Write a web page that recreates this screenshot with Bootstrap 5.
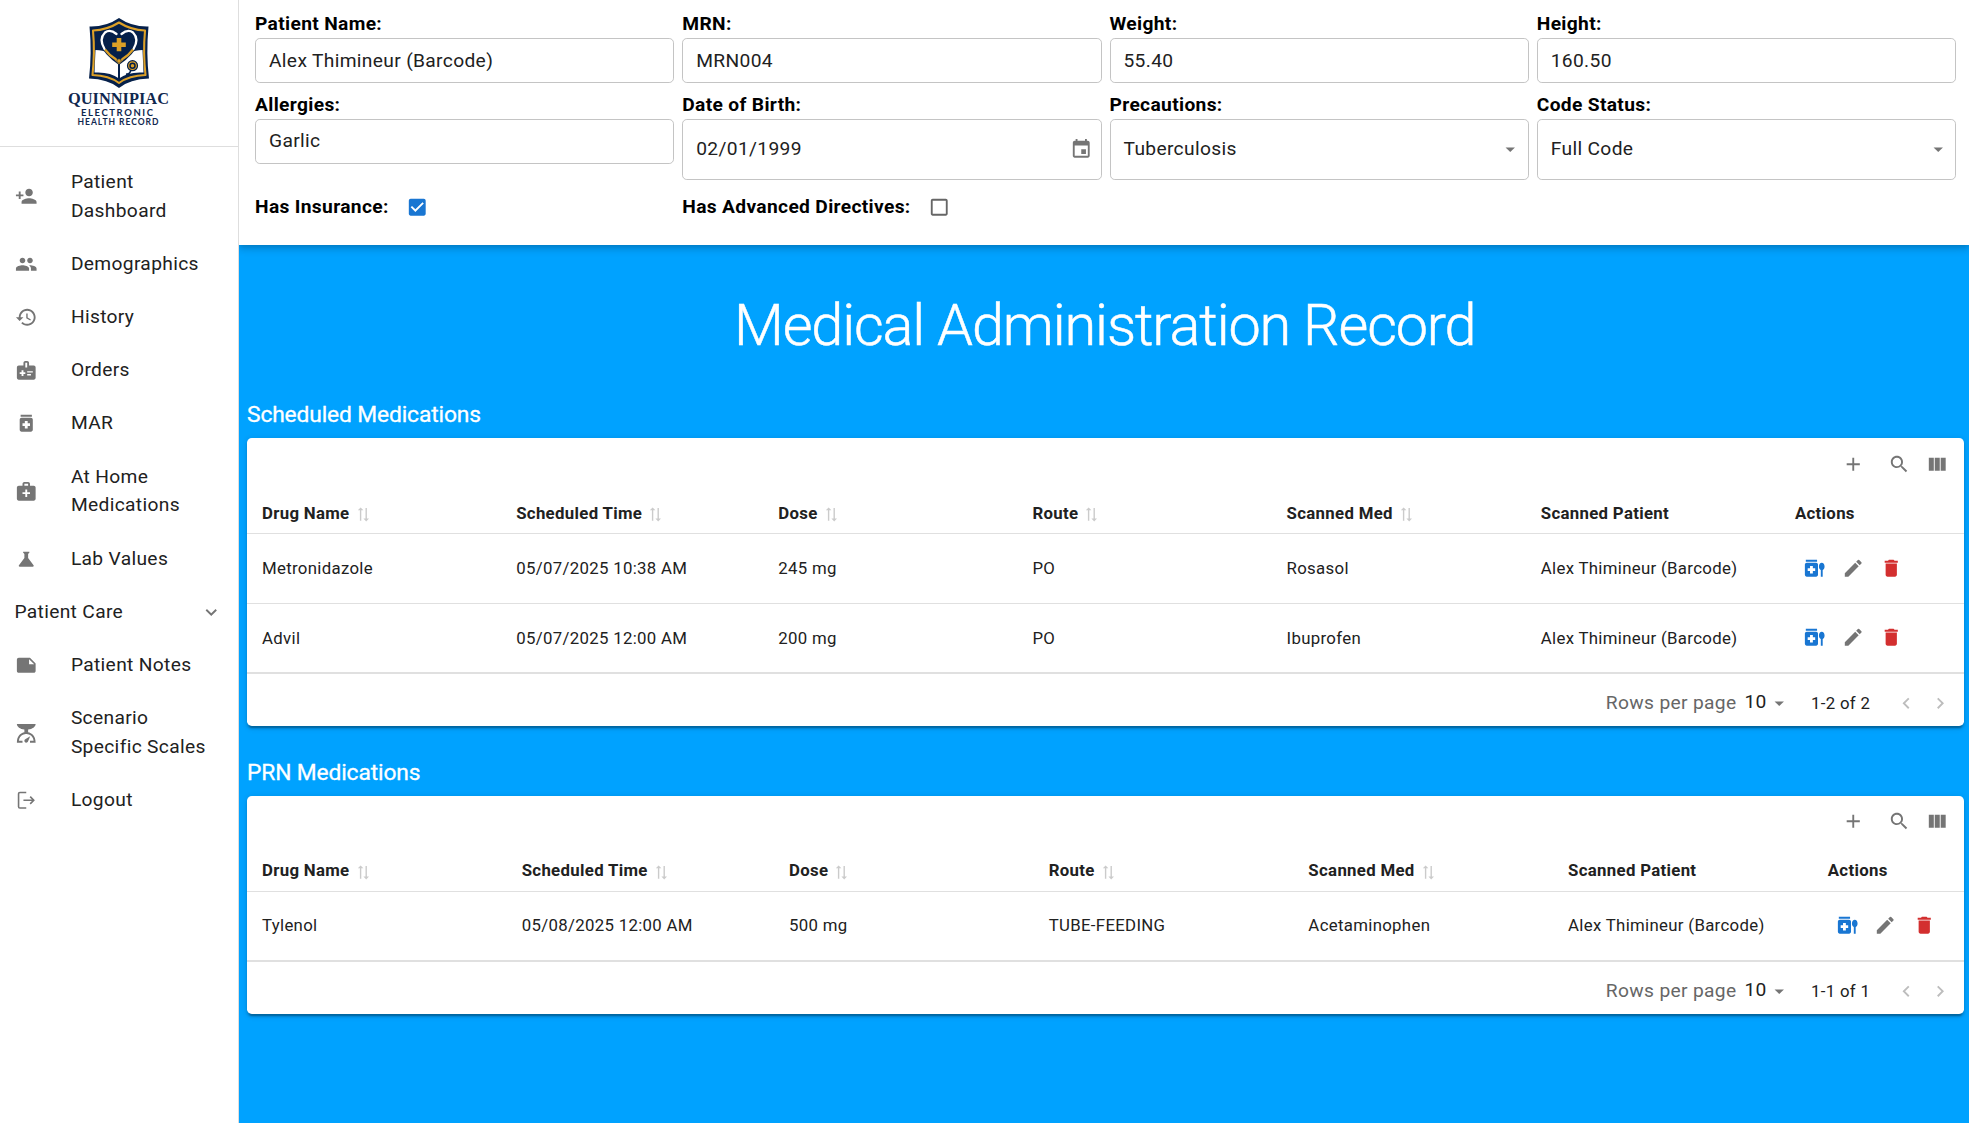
<!DOCTYPE html>
<html lang="en">
<head>
<meta charset="utf-8">
<meta name="viewport" content="width=device-width, initial-scale=1">
<title>Medical Administration Record</title>
<link href="https://cdn.jsdelivr.net/npm/bootstrap@5.3.0/dist/css/bootstrap.min.css" rel="stylesheet">
<style>
  body { font-family: Roboto, "Liberation Sans", sans-serif; font-size: 19.2px; line-height: 28.8px; letter-spacing: .34px; color: #212121; height: 1123px; overflow: hidden; }
  .ico { width: 22.5px; height: 22.5px; fill: currentColor; flex: none; display: block; }
  .side { width: 239px; border-right: 1px solid #dedede; }
  .brand-box { height: 147px; border-bottom: 1px solid #dedede; padding-top: 17px; }
  .navlist { padding-top: 8.5px; }
  .navitem { padding: 12.21px 14.4px; color: #212121; text-decoration: none; }
  .navitem .ico { color: #757575; margin: 0 33.2px 0 .8px; }
  .navitem .chev { margin: 0 1.6px 0 auto; }
  .main { background: #00a2ff; }
  .phead { height: 245px; padding: 10px 13px 0 16px; box-shadow: 0 2.4px 4.8px -1.2px rgba(0,0,0,.14), 0 4.8px 6px rgba(0,0,0,.1), 0 1.2px 12px rgba(0,0,0,.1); }
  .fgrid { display: grid; grid-template-columns: repeat(4, 1fr); gap: 7.6px 8px; }
  .fgrid label { font-weight: 700; color: #000; display: block; height: 28.2px; }
  .fbox { border: 1px solid #c4c4c4; border-radius: 4.8px; height: 44.8px; padding: 1px 13px 0; }
  .fbox.tall { height: 61px; padding-top: 0; }
  .fbox.picker { padding-right: 8.5px; }
  .fbox.choice { padding-right: 6px; }
  .fbox .ico { color: #757575; }
  .checkrow { height: 40px; }
  .checkrow .ico { margin-left: 17px; }
  .blue { color: #1976d2; } .grey { color: #757575; } .red { color: #d32f2f; } .dim { color: #666; }
  .page-title { font-size: 57.6px; font-weight: 300; line-height: 67.2px; letter-spacing: -1.13px; margin: 46.6px 0 0; padding-left: 1.5px; -webkit-text-stroke: .5px #fff; }
  .sec-title { font-size: 22.8px; font-weight: 400; line-height: 30px; letter-spacing: -.14px; margin: 0; padding: 41px 0 8px 8px; -webkit-text-stroke: .3px #fff; }
  .sec-title.second { padding: 32.2px 0 7.6px 8px; }
  .panel { border-radius: 4.8px; box-shadow: 0 3.6px 1.2px -2.4px rgba(0,0,0,.2), 0 2.4px 2.4px rgba(0,0,0,.14), 0 1.2px 6px rgba(0,0,0,.12); margin-right: 5.4px; margin-left: 8px; }
  .tools { height: 52px; padding-right: 15.2px; }
  .tools .t-add { margin-right: 23.7px; }
  .tools .t-find { margin-right: 15.5px; }
  .mar { table-layout: fixed; width: 100%; font-size: 16.8px; line-height: 24px; letter-spacing: .32px; border-collapse: collapse; }
  .mar th { height: 44px; padding: 2px 0 0 15px; font-weight: 700; border-bottom: 1px solid #e0e0e0; white-space: nowrap; }
  .mar td { height: 70px; padding: 0 0 1.4px 15px; border-bottom: 1px solid #e0e0e0; }
  .mar tr:last-child td { height: 69px; }
  .w-a { width: 254.2px; } .w-b { width: 262px; }
  .w-c { width: 259.7px; } .w-d { width: 267.3px; }
  .sorter { width: 16.8px; height: 16.8px; display: inline-block; fill: #cbcbcb; transform: rotate(-90deg); margin-left: 5px; vertical-align: -4px; }
  .acts { gap: 16.3px; padding-left: 7.8px; }
  .pager { height: 52.6px; border-top: 1px solid #e0e0e0; padding: 6.4px 12.5px 0 0; }
  .pager .p-label { margin-right: 8px; }
  .pager .p-size { margin-top: -1px; }
  .pager .p-drop { margin: 0 20.5px 0 1.2px; }
  .pager .p-range { font-size: 16.8px; margin-right: 25px; }
  .pager .p-prev { margin-right: 10.8px; }
  .off { color: #bdbdbd; }
</style>
</head>
<body class="d-flex">
<svg class="d-none">
  <symbol id="add-person" viewBox="0 0 24 24"><path d="M15 12c2.21 0 4-1.79 4-4s-1.79-4-4-4-4 1.79-4 4 1.79 4 4 4zm-9-2V7H4v3H1v2h3v3h2v-3h3v-2H6zm9 4c-2.67 0-8 1.34-8 4v2h16v-2c0-2.66-5.33-4-8-4z"/></symbol>
  <symbol id="people" viewBox="0 0 24 24"><path d="M16 11c1.66 0 2.99-1.34 2.99-3S17.66 5 16 5c-1.66 0-3 1.34-3 3s1.34 3 3 3zm-8 0c1.66 0 2.99-1.34 2.99-3S9.66 5 8 5C6.34 5 5 6.34 5 8s1.34 3 3 3zm0 2c-2.33 0-7 1.17-7 3.5V19h14v-2.5c0-2.33-4.67-3.5-7-3.5zm8 0c-.29 0-.62.02-.97.05 1.16.84 1.97 1.97 1.97 3.45V19h6v-2.5c0-2.33-4.67-3.5-7-3.5z"/></symbol>
  <symbol id="history" viewBox="0 0 24 24"><path d="M13 3c-4.97 0-9 4.03-9 9H1l3.89 3.89.07.14L9 12H6c0-3.87 3.13-7 7-7s7 3.13 7 7-3.13 7-7 7c-1.93 0-3.68-.79-4.94-2.06l-1.42 1.42C8.27 19.99 10.51 21 13 21c4.97 0 9-4.03 9-9s-4.03-9-9-9zm-1 5v5l4.28 2.54.72-1.21-3.5-2.08V8H12z"/></symbol>
  <symbol id="medinfo" viewBox="0 0 24 24"><path d="M20 7h-5V4c0-1.1-.9-2-2-2h-2c-1.1 0-2 .9-2 2v3H4c-1.1 0-2 .9-2 2v11c0 1.1.9 2 2 2h16c1.1 0 2-.9 2-2V9c0-1.1-.9-2-2-2zm-9-3h2v5h-2V4zm0 12H9v2H7v-2H5v-2h2v-2h2v2h2v2zm2-1.5V13h6v1.5h-6zm0 3V16h4v1.5h-4z"/></symbol>
  <symbol id="medication" viewBox="0 0 24 24"><path d="M6 3h12v2H6zm11 3H7c-1.1 0-2 .9-2 2v11c0 1.1.9 2 2 2h10c1.1 0 2-.9 2-2V8c0-1.1-.9-2-2-2zm-1 9h-2.5v2.5h-3V15H8v-3h2.5V9.5h3V12H16v3z"/></symbol>
  <symbol id="medkit" viewBox="0 0 24 24"><path d="M20 6h-4V4c0-1.1-.9-2-2-2h-4c-1.1 0-2 .9-2 2v2H4c-1.1 0-2 .9-2 2v12c0 1.1.9 2 2 2h16c1.1 0 2-.9 2-2V8c0-1.1-.9-2-2-2zM10 4h4v2h-4V4zm6 11h-3v3h-2v-3H8v-2h3v-3h2v3h3v2z"/></symbol>
  <symbol id="science" viewBox="0 0 24 24"><path d="M19.8 18.4 14 10.67V6.5l1.35-1.69c.26-.33.03-.81-.39-.81H9.04c-.42 0-.65.48-.39.81L10 6.5v4.17L4.2 18.4c-.49.66-.02 1.6.8 1.6h14c.82 0 1.29-.94.8-1.6z"/></symbol>
  <symbol id="expand" viewBox="0 0 24 24"><path d="M16.59 8.59 12 13.17 7.41 8.59 6 10l6 6 6-6z"/></symbol>
  <symbol id="note" viewBox="0 0 24 24"><path d="m22 10-6-6H4c-1.1 0-2 .9-2 2v12.01c0 1.1.9 1.99 2 1.99l16-.01c1.1 0 2-.89 2-1.99v-8zm-7-4.5 5.5 5.5H15V5.5z"/></symbol>
  <symbol id="scale" viewBox="0 0 24 24"><path d="M14 11V8c4.56-.58 8-3.1 8-6H2c0 2.9 3.44 5.42 8 6v3c-3.68.73-8 3.61-8 11h6v-2H4.13c.93-6.83 6.65-7.2 7.87-7.2s6.94.37 7.87 7.2H16v2h6c0-7.39-4.32-10.27-8-11z"/><path d="M16.2 15.2 10.9 18.35c-.93.62-1.18 1.87-.56 2.8s1.87 1.18 2.8.56c.25-.17.45-.38.6-.6z"/></symbol>
  <symbol id="logout" viewBox="0 0 24 24"><path d="M12 3.7H5.2c-.8 0-1.4.6-1.4 1.4v13.8c0 .8.6 1.4 1.4 1.4H12M9 12h11M16.2 8.2 20 12l-3.8 3.8" fill="none" stroke="currentColor" stroke-width="1.7"/></symbol>
  <symbol id="event" viewBox="0 0 24 24"><path d="M17 12h-5v5h5v-5zM16 1v2H8V1H6v2H5c-1.11 0-1.99.9-1.99 2L3 19c0 1.1.89 2 2 2h14c1.1 0 2-.9 2-2V5c0-1.1-.9-2-2-2h-1V1h-2zm3 18H5V8h14v11z"/></symbol>
  <symbol id="drop" viewBox="0 0 24 24"><path d="m7 10 5 5 5-5z"/></symbol>
  <symbol id="cb-on" viewBox="0 0 24 24"><path d="M19 3H5c-1.11 0-2 .9-2 2v14c0 1.1.89 2 2 2h14c1.11 0 2-.9 2-2V5c0-1.1-.89-2-2-2zm-9 14-5-5 1.41-1.41L10 14.17l7.59-7.59L19 8l-9 9z"/></symbol>
  <symbol id="cb-off" viewBox="0 0 24 24"><path d="M19 5v14H5V5h14m0-2H5c-1.1 0-2 .9-2 2v14c0 1.1.9 2 2 2h14c1.1 0 2-.9 2-2V5c0-1.1-.9-2-2-2z"/></symbol>
  <symbol id="plus" viewBox="0 0 24 24"><path d="M19 13h-6v6h-2v-6H5v-2h6V5h2v6h6v2z"/></symbol>
  <symbol id="search" viewBox="0 0 24 24"><path d="M15.5 14h-.79l-.28-.27C15.41 12.59 16 11.11 16 9.5 16 5.91 13.09 3 9.5 3S3 5.91 3 9.5 5.91 16 9.5 16c1.61 0 3.09-.59 4.23-1.57l.27.28v.79l5 4.99L20.49 19l-4.99-5zm-6 0C7.01 14 5 11.99 5 9.5S7.01 5 9.5 5 14 7.01 14 9.5 11.99 14 9.5 14z"/></symbol>
  <symbol id="columns" viewBox="0 0 24 24"><path d="M14.67 5v14H9.33V5h5.34zm1 14H21V5h-5.33v14zm-7.34 0V5H3v14h5.33z"/></symbol>
  <symbol id="sort" viewBox="0 0 24 24"><path d="m22 8-4-4v3H3v2h15v3l4-4zM2 16l4 4v-3h15v-2H6v-3l-4 4z"/></symbol>
  <symbol id="liquid" viewBox="0 0 24 24"><path d="M3 3h12v2H3zm11 3H4c-1.1 0-2 .9-2 2v11c0 1.1.9 2 2 2h10c1.1 0 2-.9 2-2V8c0-1.1-.9-2-2-2zm-1 9h-2.5v2.5h-3V15H5v-3h2.5V9.5h3V12H13v3zm7-9c-1.68 0-3 1.76-3 4 0 1.77.83 3.22 2 3.76V21h2v-7.24c1.17-.54 2-1.99 2-3.76 0-2.24-1.32-4-3-4z"/></symbol>
  <symbol id="edit" viewBox="0 0 24 24"><path d="M3 17.25V21h3.75L17.81 9.94l-3.75-3.75L3 17.25zM20.71 7.04c.39-.39.39-1.02 0-1.41l-2.34-2.34a1 1 0 0 0-1.41 0l-1.83 1.83 3.75 3.75 1.83-1.83z"/></symbol>
  <symbol id="trash" viewBox="0 0 24 24"><path d="M6 19c0 1.1.9 2 2 2h8c1.1 0 2-.9 2-2V7H6v12zM19 4h-3.5l-1-1h-5l-1 1H5v2h14V4z"/></symbol>
  <symbol id="prev" viewBox="0 0 24 24"><path d="M15.41 7.41 14 6l-6 6 6 6 1.41-1.41L10.83 12z"/></symbol>
  <symbol id="next" viewBox="0 0 24 24"><path d="M10 6 8.59 7.41 13.17 12l-4.58 4.59L10 18l6-6z"/></symbol>
</svg>

<aside class="side bg-white flex-shrink-0 h-100">
  <div class="brand-box text-center">
    <svg width="110" height="112" viewBox="0 0 110 112">
      <g stroke-linejoin="round">
        <path d="M55 1 Q42 10 25.500 9.500 Q28 36 25 61.500 Q44 62 55 71 Q66 62 85 61.500 Q82 36 84.500 9.500 Q68 10 55 1Z" fill="#05204a"/>
        <path d="M55 5.500 Q43 13 29 13.500 Q31 36 28.500 58 Q45 58.500 55 66 Q65 58.500 81.500 58 Q79 36 81 13.500 Q67 13 55 5.500Z" fill="none" stroke="#dca027" stroke-width="2.100"/>
        <path d="M31.500 33 Q46 33 55 46 Q64 33 78.500 33 L79.500 55.500 Q64 54.500 55 61.500 Q46 54.500 30.500 55.500Z" fill="#fff"/>
        <path d="M55 45V62" stroke="#05204a" stroke-width="2"/>
        <path d="M36 26 Q39 37 55 48 Q71 37 74 26 L70 18H40Z" fill="#05204a"/>
        <path d="M52.500 17 Q46 11.500 41 15.500 Q34.500 22 40.500 32 M57.500 17 Q64 11.500 69 15.500 Q75.500 22 69.500 32" fill="none" stroke="#fff" stroke-width="2.300" stroke-linecap="round"/>
        <path d="M41 32.500 Q45 38 51.500 42 L55 46 L58.500 42 Q65 38 69 32.500" fill="none" stroke="#dca027" stroke-width="2.200"/>
        <circle cx="55" cy="44" r="2.200" fill="#dca027" stroke="#05204a" stroke-width=".6"/>
        <path d="M52.700 21h4.600v4.500h4.500v4.400h-4.500v4.400h-4.600v-4.400h-4.500v-4.400h4.500z" fill="#dca027"/>
        <path d="M67 53 Q65.500 58 62 57" fill="none" stroke="#05204a" stroke-width="1.600"/>
        <circle cx="68.500" cy="48.700" r="5" fill="#dca027" stroke="#05204a" stroke-width="1.200"/><circle cx="68.500" cy="48.700" r="2.500" fill="#dca027" stroke="#05204a" stroke-width="1.500"/>
      </g>
      <g fill="#10284f" text-anchor="middle" letter-spacing="0">
        <text x="54.500" y="87" font-family="Liberation Serif, serif" font-weight="700" font-size="16.500" textLength="101" lengthAdjust="spacingAndGlyphs">QUINNIPIAC</text>
        <text x="53" y="98.500" font-family="Lato, sans-serif" font-weight="700" font-size="9.500" textLength="72">ELECTRONIC</text>
        <text x="54" y="107.500" font-family="Lato, sans-serif" font-weight="700" font-size="8.500" textLength="81">HEALTH RECORD</text>
      </g>
    </svg>
  </div>
  <nav class="navlist d-flex flex-column">
    <a class="navitem d-flex align-items-center"><svg class="ico"><use href="#add-person"/></svg><span>Patient<br>Dashboard</span></a>
    <a class="navitem d-flex align-items-center"><svg class="ico"><use href="#people"/></svg><span>Demographics</span></a>
    <a class="navitem d-flex align-items-center"><svg class="ico"><use href="#history"/></svg><span>History</span></a>
    <a class="navitem d-flex align-items-center"><svg class="ico"><use href="#medinfo"/></svg><span>Orders</span></a>
    <a class="navitem d-flex align-items-center"><svg class="ico"><use href="#medication"/></svg><span>MAR</span></a>
    <a class="navitem d-flex align-items-center"><svg class="ico"><use href="#medkit"/></svg><span>At Home<br>Medications</span></a>
    <a class="navitem d-flex align-items-center"><svg class="ico"><use href="#science"/></svg><span>Lab Values</span></a>
    <a class="navitem d-flex align-items-center"><span>Patient Care</span><svg class="ico chev"><use href="#expand"/></svg></a>
    <a class="navitem d-flex align-items-center"><svg class="ico"><use href="#note"/></svg><span>Patient Notes</span></a>
    <a class="navitem d-flex align-items-center"><svg class="ico"><use href="#scale"/></svg><span>Scenario<br>Specific Scales</span></a>
    <a class="navitem d-flex align-items-center"><svg class="ico"><use href="#logout"/></svg><span>Logout</span></a>
  </nav>
</aside>

<div class="main flex-grow-1 h-100 overflow-hidden">
  <header class="phead bg-white">
    <div class="fgrid">
      <div><label>Patient Name:</label><div class="fbox d-flex align-items-center">Alex Thimineur (Barcode)</div></div>
      <div><label>MRN:</label><div class="fbox d-flex align-items-center">MRN004</div></div>
      <div><label>Weight:</label><div class="fbox d-flex align-items-center">55.40</div></div>
      <div><label>Height:</label><div class="fbox d-flex align-items-center">160.50</div></div>
      <div><label>Allergies:</label><div class="fbox d-flex align-items-center">Garlic</div></div>
      <div><label>Date of Birth:</label><div class="fbox tall picker d-flex align-items-center justify-content-between">02/01/1999<svg class="ico"><use href="#event"/></svg></div></div>
      <div><label>Precautions:</label><div class="fbox tall choice d-flex align-items-center justify-content-between">Tuberculosis<svg class="ico"><use href="#drop"/></svg></div></div>
      <div><label>Code Status:</label><div class="fbox tall choice d-flex align-items-center justify-content-between">Full Code<svg class="ico"><use href="#drop"/></svg></div></div>
      <div class="checkrow d-flex align-items-center"><label>Has Insurance:</label><svg class="ico blue"><use href="#cb-on"/></svg></div>
      <div class="checkrow d-flex align-items-center"><label>Has Advanced Directives:</label><svg class="ico dim"><use href="#cb-off"/></svg></div>
    </div>
  </header>

  <h1 class="page-title text-white text-center">Medical Administration Record</h1>

  <h2 class="sec-title text-white">Scheduled Medications</h2>
  <section class="panel bg-white">
    <div class="tools d-flex align-items-center justify-content-end grey"><svg class="ico t-add"><use href="#plus"/></svg><svg class="ico t-find"><use href="#search"/></svg><svg class="ico"><use href="#columns"/></svg></div>
    <table class="mar">
      <colgroup><col class="w-a"><col class="w-b"><col class="w-a"><col class="w-a"><col class="w-a"><col class="w-a"><col></colgroup>
      <thead><tr>
        <th>Drug Name<svg class="sorter"><use href="#sort"/></svg></th><th>Scheduled Time<svg class="sorter"><use href="#sort"/></svg></th><th>Dose<svg class="sorter"><use href="#sort"/></svg></th><th>Route<svg class="sorter"><use href="#sort"/></svg></th><th>Scanned Med<svg class="sorter"><use href="#sort"/></svg></th><th>Scanned Patient</th><th>Actions</th>
      </tr></thead>
      <tbody>
        <tr><td>Metronidazole</td><td>05/07/2025 10:38 AM</td><td>245 mg</td><td>PO</td><td>Rosasol</td><td>Alex Thimineur (Barcode)</td><td><div class="acts d-flex"><svg class="ico blue"><use href="#liquid"/></svg><svg class="ico grey"><use href="#edit"/></svg><svg class="ico red"><use href="#trash"/></svg></div></td></tr>
        <tr><td>Advil</td><td>05/07/2025 12:00 AM</td><td>200 mg</td><td>PO</td><td>Ibuprofen</td><td>Alex Thimineur (Barcode)</td><td><div class="acts d-flex"><svg class="ico blue"><use href="#liquid"/></svg><svg class="ico grey"><use href="#edit"/></svg><svg class="ico red"><use href="#trash"/></svg></div></td></tr>
      </tbody>
    </table>
    <div class="pager d-flex align-items-center justify-content-end">
      <span class="p-label dim">Rows per page</span><span class="p-size">10</span><svg class="ico grey p-drop"><use href="#drop"/></svg><span class="p-range">1-2 of 2</span><svg class="ico off p-prev"><use href="#prev"/></svg><svg class="ico off"><use href="#next"/></svg>
    </div>
  </section>

  <h2 class="sec-title second text-white">PRN Medications</h2>
  <section class="panel bg-white">
    <div class="tools d-flex align-items-center justify-content-end grey"><svg class="ico t-add"><use href="#plus"/></svg><svg class="ico t-find"><use href="#search"/></svg><svg class="ico"><use href="#columns"/></svg></div>
    <table class="mar">
      <colgroup><col class="w-c"><col class="w-d"><col class="w-c"><col class="w-c"><col class="w-c"><col class="w-c"><col></colgroup>
      <thead><tr>
        <th>Drug Name<svg class="sorter"><use href="#sort"/></svg></th><th>Scheduled Time<svg class="sorter"><use href="#sort"/></svg></th><th>Dose<svg class="sorter"><use href="#sort"/></svg></th><th>Route<svg class="sorter"><use href="#sort"/></svg></th><th>Scanned Med<svg class="sorter"><use href="#sort"/></svg></th><th>Scanned Patient</th><th>Actions</th>
      </tr></thead>
      <tbody>
        <tr><td>Tylenol</td><td>05/08/2025 12:00 AM</td><td>500 mg</td><td>TUBE-FEEDING</td><td>Acetaminophen</td><td>Alex Thimineur (Barcode)</td><td><div class="acts d-flex"><svg class="ico blue"><use href="#liquid"/></svg><svg class="ico grey"><use href="#edit"/></svg><svg class="ico red"><use href="#trash"/></svg></div></td></tr>
      </tbody>
    </table>
    <div class="pager d-flex align-items-center justify-content-end">
      <span class="p-label dim">Rows per page</span><span class="p-size">10</span><svg class="ico grey p-drop"><use href="#drop"/></svg><span class="p-range">1-1 of 1</span><svg class="ico off p-prev"><use href="#prev"/></svg><svg class="ico off"><use href="#next"/></svg>
    </div>
  </section>
</div>
<script src="https://cdn.jsdelivr.net/npm/bootstrap@5.3.0/dist/js/bootstrap.bundle.min.js"></script>
</body>
</html>
